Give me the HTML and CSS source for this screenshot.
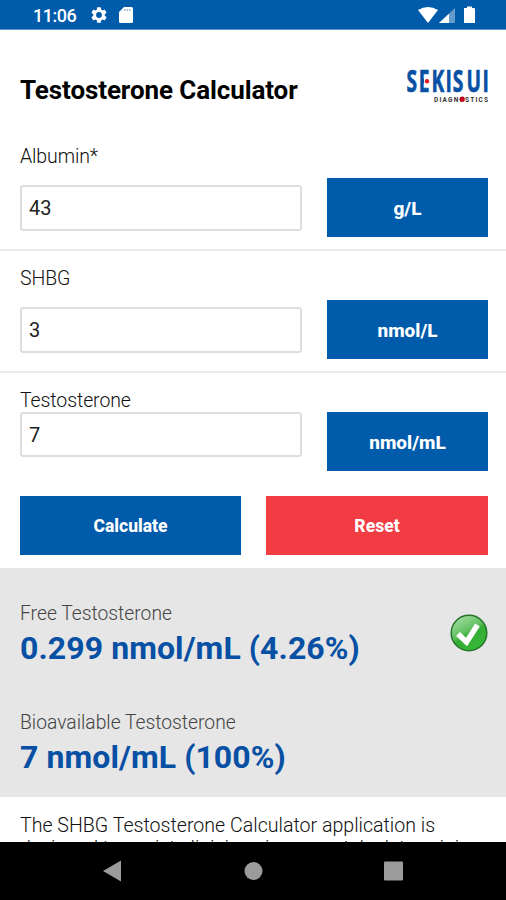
FILE: index.html
```html
<!DOCTYPE html>
<html lang="en">
<head>
<meta charset="utf-8">
<title>Testosterone Calculator</title>
<link rel="stylesheet" href="styles.css">
</head>
<body>
<div class="status">
  <span class="time">11:06</span>
  <svg class="gear" width="16" height="16" viewBox="2 2 20 20"><path fill="#fff" d="M19.14 12.94c.04-.3.06-.61.06-.94s-.02-.64-.07-.94l2.03-1.58c.18-.14.23-.41.12-.61l-1.92-3.32c-.12-.22-.37-.29-.59-.22l-2.39.96c-.5-.38-1.03-.7-1.62-.94l-.36-2.54c-.04-.24-.24-.41-.48-.41h-3.84c-.24 0-.43.17-.47.41l-.36 2.54c-.59.24-1.13.57-1.62.94l-2.39-.96c-.22-.08-.47 0-.59.22L2.74 8.87c-.12.21-.08.47.12.61l2.03 1.58c-.05.3-.09.63-.09.94s.02.64.07.94l-2.03 1.58c-.18.14-.23.41-.12.61l1.92 3.32c.12.22.37.29.59.22l2.39-.96c.5.38 1.03.7 1.62.94l.36 2.54c.05.24.24.41.48.41h3.84c.24 0 .44-.17.47-.41l.36-2.54c.59-.24 1.13-.56 1.62-.94l2.39.96c.22.08.47 0 .59-.22l1.92-3.32c.12-.22.07-.47-.12-.61l-2.01-1.58zM12 15.6A3.6 3.6 0 1 1 12 8.4a3.6 3.6 0 0 1 0 7.2z"/></svg>
  <svg class="card" width="14" height="16" viewBox="0 0 14 16"><path fill="#fff" d="M5 0h7.500q1.500 0 1.500 1.500v13q0 1.500-1.500 1.500h-11Q0 16 0 14.500V5z"/><path stroke="#005bab" stroke-opacity=".45" stroke-width="1.200" d="M5.700 2v2M8.200 2v2M10.700 2v2"/></svg>
  <svg class="signals" width="58" height="18" viewBox="0 0 58 18"><path fill="#fff" d="M0 4Q10-2 20 4L10 17z"/><path fill="#fff" fill-opacity=".4" d="M37 2v15H21z"/><path fill="#fff" d="M31 7.700V17H21z"/><path fill="#fff" d="M46 2h3V.5h5V2h2q1 0 1 1v14H46z"/></svg>
</div>
<main>
  <header class="head">
    <h1>Testosterone Calculator</h1>
    <svg class="logo" width="84" height="42" viewBox="0 0 84 42">
      <text class="brand" transform="translate(0 26) scale(.64 1)" x="2.200 21.500 41.500 63.400 74.600 96 121">SEKISUI</text>
      <path fill="#fff" d="M19 11.500h6.300v7.200H19z"/>
      <circle cx="22" cy="15.200" r="2.200" fill="#e21b23"/>
      <text class="sub" x="29" y="35.500" textLength="54" lengthAdjust="spacing">DIAGNOSTICS</text>
      <circle cx="57.200" cy="33.200" r="2.600" fill="#c4001a"/>
    </svg>
  </header>
  <section class="field first"><label>Albumin*</label><div class="row"><div class="input">43</div><div class="btn">g/L</div></div></section>
  <section class="field"><label>SHBG</label><div class="row"><div class="input">3</div><div class="btn">nmol/L</div></div></section>
  <section class="field tight"><label>Testosterone</label><div class="row"><div class="input">7</div><div class="btn">nmol/mL</div></div></section>
  <div class="actions"><div class="btn">Calculate</div><div class="btn reset">Reset</div></div>
  <section class="results">
    <div class="result"><div><div class="name">Free Testosterone</div><div class="value">0.299 nmol/mL (4.26%)</div></div>
      <svg class="check" width="38" height="38" viewBox="0 0 38 38">
        <defs><linearGradient id="g" x1=".15" y1=".05" x2=".7" y2="1"><stop offset="0" stop-color="#a5dda4"/><stop offset=".45" stop-color="#5fc05e"/><stop offset=".55" stop-color="#35ac35"/><stop offset="1" stop-color="#35b936"/></linearGradient></defs>
        <circle cx="19" cy="19" r="17.800" fill="url(#g)" stroke="#27752c" stroke-width="1.500"/>
        <path fill="none" stroke="#fff" stroke-width="5.500" d="M8 20l8.500 8L27.500 11"/>
      </svg></div>
    <div class="result"><div><div class="name">Bioavailable Testosterone</div><div class="value">7 nmol/mL (100%)</div></div></div>
  </section>
  <p class="about">The SHBG Testosterone Calculator application is<br>designed to assist clinicians in accurately determining</p>
</main>
<nav>
  <svg width="506" height="58" viewBox="0 0 506 58"><path fill="#9b9b9b" d="M103 29l18-10.500v21z"/><circle cx="253.500" cy="29" r="9" fill="#9b9b9b"/><rect x="384" y="19.500" width="19" height="19" rx="1" fill="#9b9b9b"/></svg>
</nav>
</body>
</html>
```
FILE: styles.css
```css
* { box-sizing: border-box; }
body { margin: 0; width: 506px; height: 900px; overflow: hidden; display: flex; flex-direction: column; background: #fff; color: #222; font-family: Roboto, sans-serif; }
.status { flex: none; height: 30px; background: #005bab; border-bottom: 1px solid #5b93c8; color: #fff; display: flex; align-items: center; padding: 1px 30px 0 33px; }
.time { width: 58px; font-size: 18px; font-weight: 500; line-height: 31px; letter-spacing: -.5px; padding-top: 1px; }
.card { margin-left: 12px; }
.signals { margin-left: auto; }
main { flex: 1; min-height: 0; overflow: hidden; }
.head { height: 104px; padding: 36px 17px 0 20px; display: flex; justify-content: space-between; }
h1 { margin: 8px 0 0; font-size: 26px; line-height: 32px; font-weight: 700; color: #000; letter-spacing: -.1px; }
.brand { font: 700 30px "Open Sans", sans-serif; fill: #0750a4; stroke: #0750a4; stroke-width: .7px; }
.sub { font: 700 6.500px Roboto, sans-serif; fill: #333; }
.field { height: 122px; padding: 16px 18px 0 20px; border-bottom: 2px solid #ececec; }
.field.first { height: 117px; padding-top: 11px; }
label { display: block; font-size: 19.500px; line-height: 24px; height: 33px; font-weight: 350; color: #111; letter-spacing: -.1px; }
.row { display: flex; justify-content: space-between; align-items: center; }
.input { width: 282px; height: 46px; border: 2px solid #dedede; border-radius: 3px; padding: 0 7px; font-size: 20px; line-height: 43px; font-weight: 400; }
.btn { width: 161px; height: 59px; background: #005bab; color: #fff; font-weight: 800; font-size: 19px; line-height: 61px; text-align: center; }
.tight { height: 97px; border: 0; }
.tight label { height: 23px; }
.tight .row { align-items: flex-start; }
.tight .input { height: 45px; }
.actions { height: 98px; padding: 26px 18px 0 20px; display: flex; justify-content: space-between; }
.actions .btn { width: 221px; font-size: 17.500px; line-height: 61px; }
.actions .reset { width: 222px; background: #f13c43; }
.results { height: 229px; background: #e6e6e6; padding: 34px 18px 0 20px; }
.result { height: 109px; display: flex; justify-content: space-between; }
.name { font-size: 19.300px; line-height: 24px; font-weight: 300; color: #444; }
.value { font-size: 32px; line-height: 44px; font-weight: 700; color: #0750a4; white-space: nowrap; letter-spacing: .08px; }
.check { margin-top: 12px; }
.about { margin: 0; padding: 17px 20px 0; font-size: 19.600px; line-height: 23px; font-weight: 300; color: #111; white-space: nowrap; }
nav { flex: none; height: 58px; background: #000; }
nav svg { display: block; }
```
